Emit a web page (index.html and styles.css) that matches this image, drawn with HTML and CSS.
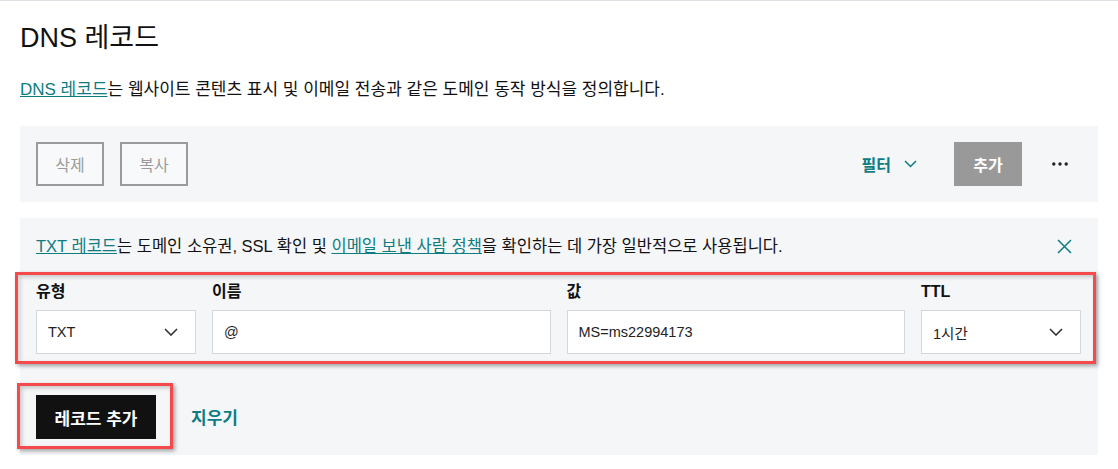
FILE: index.html
```html
<!DOCTYPE html>
<html lang="ko">
<head>
    <meta charset="UTF-8">
    <meta name="viewport" content="width=device-width, initial-scale=1.0">
    <title>DNS 레코드</title>
    <link rel="stylesheet" href="styles.css">
</head>
<body>

<div class="page">
    <h1 class="title">DNS 레코드</h1>
    <p class="intro"><a href="#">DNS 레코드</a>는 웹사이트 콘텐츠 표시 및 이메일 전송과 같은 도메인 동작 방식을 정의합니다.</p>

    <div class="toolbar">
        <div class="toolbar-left">
            <button class="btn-outline">삭제</button>
            <button class="btn-outline">복사</button>
        </div>
        <div class="toolbar-right">
            <button class="btn-filter">필터
                <svg width="13" height="8" viewBox="0 0 13 8"><path d="M1 1l5.5 5.5L12 1" fill="none" stroke="currentColor" stroke-width="1.5"/></svg>
            </button>
            <button class="btn-disabled">추가</button>
            <button class="btn-more">
                <svg width="16" height="4" viewBox="0 0 16 4"><circle cx="1.8" cy="2" r="1.7"/><circle cx="8" cy="2" r="1.7"/><circle cx="14.2" cy="2" r="1.7"/></svg>
            </button>
        </div>
    </div>

    <div class="record-panel">
        <div class="notice">
            <p><a href="#">TXT 레코드</a>는 도메인 소유권, SSL 확인 및 <a href="#">이메일 보낸 사람 정책</a>을 확인하는 데 가장 일반적으로 사용됩니다.</p>
            <button class="notice-close">
                <svg width="15" height="15" viewBox="0 0 15 15"><path d="M1 1l13 13M14 1L1 14" fill="none" stroke="currentColor" stroke-width="1.5"/></svg>
            </button>
        </div>

        <!-- highlighted row -->
        <div class="fields highlight">
            <div class="field">
                <label>유형</label>
                <div class="control select">TXT
                    <svg width="14" height="8" viewBox="0 0 14 8"><path d="M1 1l6 6 6-6" fill="none" stroke="#333" stroke-width="1.6"/></svg>
                </div>
            </div>
            <div class="field">
                <label>이름</label>
                <input class="control" type="text" value="@">
            </div>
            <div class="field">
                <label>값</label>
                <input class="control" type="text" value="MS=ms22994173">
            </div>
            <div class="field">
                <label>TTL</label>
                <div class="control select">1시간
                    <svg width="14" height="8" viewBox="0 0 14 8"><path d="M1 1l6 6 6-6" fill="none" stroke="#333" stroke-width="1.6"/></svg>
                </div>
            </div>
        </div>

        <div class="actions">
            <div class="highlight highlight-btn">
                <button class="btn-primary">레코드 추가</button>
            </div>
            <button class="btn-link">지우기</button>
        </div>
    </div>
</div>

</body>
</html>
```

FILE: styles.css
```css
body {
    font-family: "Liberation Sans", "Noto Sans CJK KR", sans-serif;
    color: #111;
    background: white;
    margin: 0;
}

button, input {
    font-family: inherit;
    cursor: pointer;
}

a {
    color: #0e7c83;
}

.page {
    border-top: 1px solid #dde1e6;
    padding: 0 20px;
}

.title {
    font-size: 27px;
    font-weight: normal;
    line-height: 32px;
    margin: 21px 0 0;
}

.intro {
    font-size: 17px;
    line-height: 24px;
    margin: 24px 0 0;
}

.toolbar {
    display: flex;
    justify-content: space-between;
    align-items: center;
    background: #f5f6f8;
    padding: 16px;
    margin-top: 24px;
}

.toolbar-left {
    display: flex;
    gap: 16px;
}

.btn-outline {
    width: 68px;
    height: 44px;
    border: 2px solid #9b9b9b;
    background: #f8f9fa;
    color: #9b9b9b;
    font-size: 16px;
}

.toolbar-right {
    display: flex;
    align-items: center;
}

.btn-filter {
    height: 44px;
    padding: 0 16px;
    display: flex;
    align-items: center;
    gap: 13px;
    background: none;
    border: none;
    color: #0e7c83;
    font-size: 16px;
    font-weight: bold;
    margin-right: 21px;
}

.btn-disabled {
    width: 68px;
    height: 44px;
    border: none;
    background: #999;
    color: white;
    font-size: 16px;
    font-weight: bold;
    margin-right: 16px;
}

.btn-more {
    width: 44px;
    height: 44px;
    border: none;
    background: none;
    display: flex;
    align-items: center;
    justify-content: center;
    fill: #222;
}

.record-panel {
    background: #f5f6f8;
    margin-top: 16px;
    padding: 0 16px 6px;
}

.notice {
    display: flex;
    justify-content: space-between;
    align-items: center;
    padding: 17px 0 15px;
}

.notice p {
    margin: 0;
    font-size: 16.5px;
    line-height: 22px;
}

.notice-close {
    width: 25px;
    height: 22px;
    border: none;
    background: none;
    padding: 0;
    color: #0e7c83;
    display: flex;
    align-items: center;
    justify-content: flex-start;
}

.highlight {
    border: 3px solid #f44a4b;
    box-shadow: 2px 2px 4px rgba(0, 0, 0, 0.35), inset 2px 2px 4px rgba(0, 0, 0, 0.2);
}

.fields {
    display: grid;
    grid-template-columns: 160px 1fr 1fr 160px;
    column-gap: 16px;
    margin: 0 -14px 0 -21px;
    padding: 8px 12px 7px 18px;
}

.field label {
    display: block;
    font-size: 16px;
    font-weight: bold;
    line-height: 18px;
    margin-bottom: 9px;
}

.control {
    box-sizing: border-box;
    width: 100%;
    height: 44px;
    border: 1px solid #d3d8de;
    background: white;
    display: flex;
    align-items: center;
    justify-content: space-between;
    padding: 0 11px;
    font-size: 14.5px;
    color: #222;
    margin: 0;
}

.select {
    padding-right: 17px;
}

.actions {
    display: flex;
    align-items: center;
    margin-top: 19px;
}

.highlight-btn {
    margin-left: -19px;
    padding: 9px 14px 7px 16px;
}

.btn-primary {
    display: block;
    width: 120px;
    height: 44px;
    border: none;
    background: #111;
    color: white;
    font-size: 17px;
    font-weight: bold;
}

.btn-link {
    margin-left: 18px;
    border: none;
    background: none;
    padding: 0;
    color: #0e7c83;
    font-size: 17px;
    font-weight: bold;
}
```
